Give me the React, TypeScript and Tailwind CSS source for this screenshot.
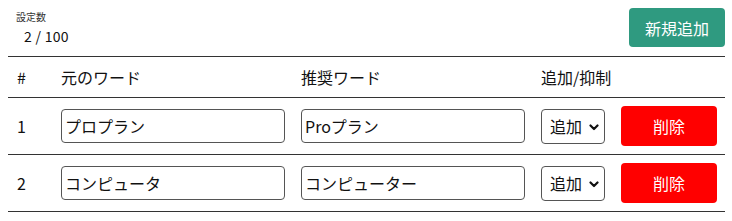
const rows = [
  { id: 1, from: "プロプラン", to: "Proプラン", mode: "追加" },
  { id: 2, from: "コンピュータ", to: "コンピューター", mode: "追加" },
];

const Chevron = () => (
  <svg width="10" height="7" viewBox="0 0 10 7" className="absolute right-[6px] top-[15px] pointer-events-none">
    <path d="M1.5 1.5 L5 5 L8.5 1.5" fill="none" stroke="#111" strokeWidth="2.2" strokeLinecap="round" strokeLinejoin="round" />
  </svg>
);

export default function App() {
  return (
    <div
      className="w-[732px] h-[221px] bg-white text-[#111] pl-2 pr-[7px]"
      style={{ fontFamily: '"Noto Sans CJK JP", "Noto Sans", sans-serif' }}
    >
      {/* top bar */}
      <div className="flex justify-between items-start pt-2 h-[56px]">
        <div className="pl-2 pt-[2px]">
          <div className="text-[10px] leading-[14px] text-[#333]">設定数</div>
          <div className="pl-2 text-[14px] leading-[20px] mt-[2px] tracking-[0.3px]">2 / 100</div>
        </div>
        <button className="w-[96px] h-[39px] rounded-[4px] bg-[#2f9a80] text-white text-[16px] leading-none">
          新規追加
        </button>
      </div>

      {/* header row */}
      <div className="grid grid-cols-[45px_240px_240px_80px_112px] items-center h-[42px] border-y border-[#333] text-[16px]">
        <div className="pl-[9px]">#</div>
        <div className="pl-2">元のワード</div>
        <div className="pl-2">推奨ワード</div>
        <div className="pl-2">追加/抑制</div>
        <div />
      </div>

      {rows.map((r) => (
        <div
          key={r.id}
          className="grid grid-cols-[45px_240px_240px_80px_112px] items-center h-[57px] border-b border-[#333] text-[16px]"
        >
          <div className="pl-[9px]">{r.id}</div>
          <div className="pl-2">
            <input
              defaultValue={r.from}
              className="w-[224px] h-[34px] border border-[#555] rounded-[4px] px-[3px] text-[16px] outline-none"
            />
          </div>
          <div className="pl-2">
            <input
              defaultValue={r.to}
              className="w-[224px] h-[34px] border border-[#555] rounded-[4px] px-[3px] text-[16px] outline-none"
            />
          </div>
          <div className="pl-2">
            <div className="relative w-[64px] h-[35px]">
              <select
                defaultValue={r.mode}
                className="appearance-none w-[64px] h-[35px] border border-[#555] rounded-[4px] pl-[8px] text-[16px] bg-white outline-none"
              >
                <option>追加</option>
                <option>抑制</option>
              </select>
              <Chevron />
            </div>
          </div>
          <div className="pl-2">
            <button className="w-[96px] h-[40px] rounded-[4px] bg-[#ff0000] text-white text-[16px] leading-none">
              削除
            </button>
          </div>
        </div>
      ))}
    </div>
  );
}
